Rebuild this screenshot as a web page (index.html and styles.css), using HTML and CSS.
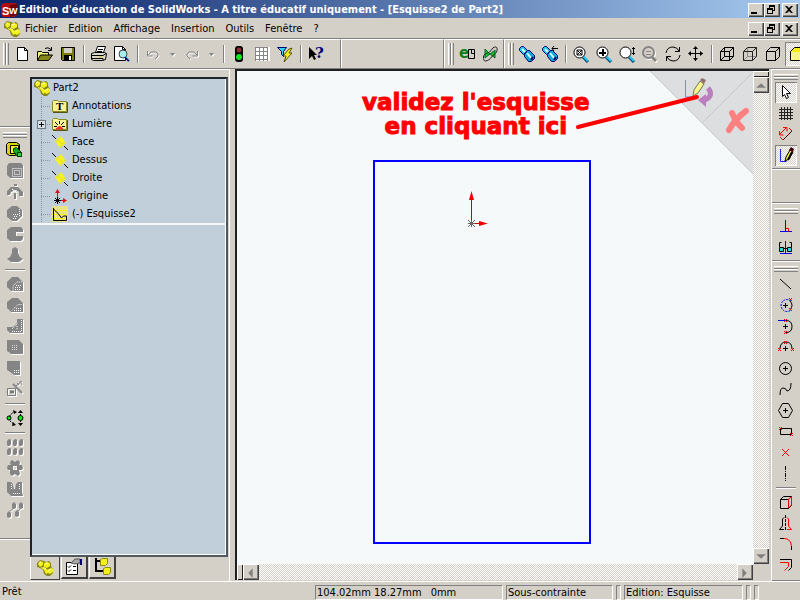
FILE: index.html
```html
<!DOCTYPE html>
<html lang="fr">
<head>
<meta charset="utf-8">
<title>SolidWorks - Esquisse2 de Part2</title>
<link rel="stylesheet" href="styles.css">
</head>
<body>
<svg class="defs" aria-hidden="true">
  <symbol id="part" viewBox="0 0 18 18">
    <path d="M1 4l3-3 4 1 2 1 3-1 2 2v3l1 2 1 1v4l-3 3h-3l-3-2-1-4-3-2-3-1z" fill="#86861c"/>
    <path d="M2 5l2-3 3 1v3L4 8zM8 4l3-1 3 1v3l-3 2-3-1zM5 8l3 1 3 1 1 4-2 1-2-4-3-2zM11 11l4-2 2 1v3l-3 2-2-1z" fill="#f4f01c"/>
    <path d="M3 4l2-1M9 5l3-1M12 12l3-2M7 8l3 2" stroke="#fdfcae" fill="none"/>
  </symbol>
  <symbol id="plane" viewBox="0 0 16 16">
    <path d="M3 7l6-5 5 7-6 5z" fill="#f6f21e"/>
    <path d="M0 1l4 4M12 12l4 4" stroke="#000" fill="none"/>
    <path d="M5 5l6 6M9 3l-5 5M13 8l-5 5" stroke="#c8c860" stroke-dasharray="1 1" fill="none"/>
  </symbol>
  <symbol id="folder" viewBox="0 0 16 14">
    <path d="M.5 12.500v-10l1-1h4l1 1h8v10z" fill="#f5f29a" stroke="#8a8a20"/>
    <path d="M15.500 3v10.500H1" fill="none" stroke="#55551a"/>
  </symbol>
  <symbol id="scope" viewBox="0 0 18 18">
    <path d="M1.500 3.500l2-2h2l4 4-4 4-4-4z" fill="#1cc4e8" stroke="#000080"/>
    <path d="M6.500 9.500l3-4h2l5 5v3l-3 3h-3l-4-5z" fill="#12a8dc" stroke="#000060"/>
    <path d="M4 4l3 3M9 8l4 5" stroke="#d8fbff" stroke-width="2"/>
    <path d="M13 15l2-3" stroke="#000060" stroke-width="2"/>
  </symbol>
  <symbol id="lens" viewBox="0 0 18 18">
    <path d="M11 12l5 5" stroke="#004a70" stroke-width="3"/><path d="M11 11l5 5" stroke="#2cc7f0" stroke-width="2"/>
    <circle cx="7.500" cy="7.500" r="5.500" fill="#fff" stroke="#000"/>
  </symbol>
  <symbol id="min" viewBox="0 0 12 10"><path d="M2 7h6v2H2z"/></symbol>
  <symbol id="restore" viewBox="0 0 12 10"><path d="M4 0h6v6H8V5h1V2H5v1H4zM2 3h6v6H2zM3 5v3h4V5z" fill-rule="evenodd"/></symbol>
  <symbol id="close" viewBox="0 0 12 10"><path d="M2 1h2l2 2 2-2h2L7 4.500 10 8H8L6 6 4 8H2l3-3.500z"/></symbol>
</svg>

<header class="titlebar">
  <svg class="logo" viewBox="0 0 18 16" aria-hidden="true">
    <path d="M1 3l3-2h12l1 2v10l-3 2H3l-2-2z" fill="#b00d10"/><path d="M10 3l7-1v11l-7 2z" fill="#6b0508"/>
    <text class="logo-text" x="2" y="13">S</text><text class="logo-text small" x="9" y="12">W</text>
  </svg>
  <h1 class="title">Edition d'éducation de SolidWorks - A titre éducatif uniquement - [Esquisse2 de Part2]</h1>
  <div class="winbtns">
    <button aria-label="Réduire"><svg><use href="#min"/></svg></button><button aria-label="Restaurer"><svg><use href="#restore"/></svg></button><button class="x" aria-label="Fermer"><svg><use href="#close"/></svg></button>
  </div>
</header>

<nav class="menubar">
  <svg class="doc" aria-hidden="true"><use href="#part"/></svg>
  <button>Fichier</button><button>Edition</button><button>Affichage</button><button>Insertion</button><button>Outils</button><button>Fenêtre</button><button>?</button>
  <div class="winbtns">
    <button aria-label="Réduire le document"><svg><use href="#min"/></svg></button><button aria-label="Restaurer le document"><svg><use href="#restore"/></svg></button><button class="x" aria-label="Fermer le document"><svg><use href="#close"/></svg></button>
  </div>
</nav>

<div class="toolbar">
  <div class="band">
    <i class="grip"></i>
    <button aria-label="Nouveau"><svg viewBox="0 0 18 18"><path d="M4.500 2.500h7l3 3v10h-10z" fill="#fff" stroke="#000"/><path d="M11.500 2.500v3h3" fill="none" stroke="#000"/></svg></button>
    <button aria-label="Ouvrir"><svg viewBox="0 0 18 18"><path d="M1.500 15V6.500h4l1 1h6V10" fill="#f3ef7c" stroke="#000"/><path d="M1.500 15.500l3-5.500h12l-4 5.500z" fill="#85851a" stroke="#000"/><path d="M9 3.500q3-2 6 1M15.500 2v3.500H12" fill="none" stroke="#000"/></svg></button>
    <button aria-label="Enregistrer"><svg viewBox="0 0 18 18"><path d="M2.500 2.500h13v13h-12l-1-1z" fill="#7d7d0c" stroke="#000"/><path d="M5 3h8v5H5z" fill="#d4d0c8"/><path d="M5 10h8v5H5z" fill="#000"/><path d="M10 11h2v4h-2z" fill="#fff"/></svg></button>
    <i class="sep"></i>
    <button aria-label="Imprimer"><svg viewBox="0 0 18 18"><path d="M5.500 7.500l2-6h8l-2 6" fill="#fff" stroke="#000"/><path d="M8 4.500h5M7 6.500h5" stroke="#000"/><path d="M1.500 8.500l3-1h10l2 1-1 6-3 1h-9l-2-1z" fill="#d8d6c8" stroke="#000"/><path d="M2 10.500h11l3-2M2 13.500h11v2" fill="none" stroke="#000"/><path d="M9 12h3" stroke="#d8c800"/></svg></button>
    <button aria-label="Aperçu"><svg viewBox="0 0 18 18"><path d="M1.500 1.500h8l3 3v11h-11z" fill="#fff" stroke="#000"/><path d="M9.500 1.500v3h3" fill="none" stroke="#000"/><circle cx="10" cy="9" r="4" fill="#aee" stroke="#444"/><path d="M12 12l4 4" stroke="#008" stroke-width="2"/><path d="M12 11l4 4" stroke="#1bb"/></svg></button>
    <i class="sep"></i>
    <button class="off" aria-label="Annuler" disabled><svg viewBox="0 0 18 18"><path d="M3.500 6v5h5M4 10l3-3h5l2 2v2l-3 3" fill="none" stroke="#858585"/></svg></button>
    <button class="drop off" aria-label="Liste annuler" disabled><svg viewBox="0 0 10 10"><path d="M2 4h5L4.500 7z" fill="#858585"/></svg></button>
    <button class="off" aria-label="Rétablir" disabled><svg viewBox="0 0 18 18"><path d="M14.500 6v5h-5M14 10l-3-3H6L4 9v2l3 3" fill="none" stroke="#858585"/></svg></button>
    <button class="drop off" aria-label="Liste rétablir" disabled><svg viewBox="0 0 10 10"><path d="M2 4h5L4.500 7z" fill="#858585"/></svg></button>
    <i class="sep"></i>
    <button aria-label="Reconstruire"><svg viewBox="0 0 18 18"><rect x="5" y="1" width="8" height="16" rx="3" fill="#000"/><circle cx="9" cy="5" r="2.500" fill="#8a3030"/><circle cx="9" cy="12" r="3" fill="#0de81b"/></svg></button>
    <button aria-label="Grille"><svg viewBox="0 0 18 18"><path d="M2 2h15v14H2z" fill="#fff"/><path d="M2.500 2v14M6.500 2v14M10.500 2v14M14.500 2v14M2 2.500h13M2 6.500h13M2 10.500h13M2 14.500h13" stroke="#858585"/></svg></button>
    <button aria-label="Filtres"><svg viewBox="0 0 18 18"><path d="M1.500 2.500h9l-3 4v5l-2-2v-3z" fill="#37cdf2" stroke="#000078"/><path d="M13 4l3-1-3 5h3l-8 9 2-6H7z" fill="#f6ee1b" stroke="#555500"/></svg></button>
    <i class="sep"></i>
    <button aria-label="Aide contextuelle"><svg viewBox="0 0 18 18"><path d="M2 2l8 8H7l2 4-2 1-2-4-3 3z"/><text class="help" x="8" y="13">?</text></svg></button>
  </div>
  <div class="band fill"></div>
  <div class="band">
    <i class="grip"></i>
    <button aria-label="eDrawing"><svg viewBox="0 0 18 18"><text class="edraw" x="1" y="13">e</text><path d="M10.500 4.500h6v9h-6zM13.500 4.500v4h3" fill="#d4d0c8" stroke="#000"/></svg></button>
    <button aria-label="Animer"><svg viewBox="0 0 18 18"><path d="M4 4l5 5-5 4zM14 5L9 9l5 4z" fill="#16c424" stroke="#063"/><path d="M2.500 12c0-4 5-3 7-6s3-4 5-4 2 3 1 5-4 3-5 5-4 4-6 4-2-2-2-4z" fill="none" stroke="#222"/></svg></button>
  </div>
  <div class="band last">
    <i class="grip"></i>
    <button aria-label="Orientation"><svg><use href="#scope"/></svg></button>
    <button aria-label="Vue précédente"><svg viewBox="0 0 18 18"><use href="#scope"/><path d="M11 3.500h6M13 1l-2 2.500L13 6" fill="none" stroke="#000"/></svg></button>
    <i class="sep"></i>
    <button aria-label="Zoom au mieux"><svg viewBox="0 0 18 18"><use href="#lens"/><path d="M5 5h5v5H5zM5 5l5 5M10 5l-5 5" fill="none" stroke="#000"/></svg></button>
    <button aria-label="Zoom fenêtre"><svg viewBox="0 0 18 18"><use href="#lens"/><path d="M7 4h2v7H7zM4 7h7v2H4z"/></svg></button>
    <button aria-label="Zoom avant arrière"><svg viewBox="0 0 18 18"><use href="#lens"/><path d="M15.500 2v8M14 3.500h3M14 8.500h3" stroke="#000"/></svg></button>
    <button class="off" aria-label="Zoom sélection" disabled><svg viewBox="0 0 18 18"><circle cx="7.500" cy="7.500" r="5.500" fill="#d4d0c8" stroke="#858585" stroke-width="2"/><path d="M5 6.500h5M5 9.500h5" stroke="#858585"/><path d="M11 12l4 4" stroke="#858585" stroke-width="3"/></svg></button>
    <button aria-label="Rotation"><svg viewBox="0 0 18 18"><path d="M2 8q1-6 7-6 4 0 6 4M16 10q-1 6-7 6-4 0-6-4M15.500 2v4.500H11M2.500 16v-4.500H7" fill="none" stroke="#000"/></svg></button>
    <button aria-label="Translation"><svg viewBox="0 0 18 18"><path d="M8.500 2v14M2 8.500h14" stroke="#000"/><path d="M6 4l2.500-3L11 4zM6 13l2.500 3 2.500-3zM4 6L1 8.500 4 11zM13 6l3 2.500-3 2.500z"/></svg></button>
    <i class="sep"></i>
    <button aria-label="Image filaire"><svg viewBox="0 0 18 18"><path d="M2.500 6.500h9v9h-9zM6.500 2.500h9v9h-9zM2.500 6.500l4-4M11.500 6.500l4-4M2.500 15.500l4-4M11.500 15.500l4-4" fill="none" stroke="#000"/></svg></button>
    <button aria-label="Lignes cachées en gris"><svg viewBox="0 0 18 18"><path d="M6.500 2.500v9h9M2.500 15.500l4-4" fill="none" stroke="#8a8a8a"/><path d="M2.500 6.500h9v9h-9zM2.500 6.500l4-4h9v9l-4 4M11.500 6.500l4-4" fill="none" stroke="#222"/></svg></button>
    <button aria-label="Lignes cachées supprimées"><svg viewBox="0 0 18 18"><path d="M2.500 6.500h9v9h-9zM2.500 6.500l4-4h9v9l-4 4M11.500 6.500l4-4" fill="none" stroke="#000"/></svg></button>
    <button class="on" aria-label="Image ombrée"><svg viewBox="0 0 18 18"><path d="M3.500 6.500l4-4h9v9l-4 4h-9z" fill="#f6ee1b" stroke="#000"/><path d="M4 7h9v8H4z" fill="#fbf68a"/></svg></button>
  </div>
</div>

<main class="work">
  <div class="side left">
    <div class="group top"></div>
    <div class="group grow">
      <i class="grip"></i>
      <button aria-label="Base bossage"><svg viewBox="0 0 18 18"><path d="M.5 3.500l2-2h8l3 2v7h-4v4h-6l-3-2z" fill="#d6d410" stroke="#000"/><path d="M4.500 4.500h8v8h-8z" fill="#f8f430" stroke="#000"/><path d="M7.500 7.500l3-1 5 5v4h-4l-4-5z" fill="#12a82a" stroke="#030"/><path d="M11.500 11.500h4v4h-4z" fill="#2bd845" stroke="#030"/></svg></button>
      <button class="off" aria-label="Enlèvement de matière" disabled><svg viewBox="0 0 18 18"><path d="M1 4l2-3h12l2 2v13H4l-3-3z" fill="#858585"/><path d="M6.500 6.500h9v8h-9zM8.500 8.500h5v4h-5z" fill="none" stroke="#fff" stroke-dasharray="1 1"/></svg></button>
      <button class="off" aria-label="Révolution" disabled><svg viewBox="0 0 18 18"><path d="M1 12V8l4-4h7l5 5v4h-4V9l-3-2-5 2-1 3z" fill="#858585"/><path d="M9 10v6M8 2h3" stroke="#858585" stroke-width="2"/><path d="M6 6l4 3" stroke="#fff"/></svg></button>
      <button class="off" aria-label="Enlèvement révolution" disabled><svg viewBox="0 0 18 18"><path d="M1 6l5-4h5l5 4v6l-5 5H6l-5-4z" fill="#858585"/><path d="M7 10.500h5M8 12.500h4M7 14.500h4M13.500 5v7" stroke="#fff" stroke-dasharray="1 1"/></svg></button>
      <button class="off" aria-label="Balayage" disabled><svg viewBox="0 0 18 18"><path d="M5 2h10l2 2v3h-7v4h7v3l-2 2H4l-3-3V5z" fill="#858585"/></svg></button>
      <button class="off" aria-label="Lissage" disabled><svg viewBox="0 0 18 18"><path d="M6 3l3-2 3 2v4l2 4 3 2-4 3H5l-4-3 3-2 2-4z" fill="#858585"/></svg></button>
      <i class="sep"></i>
      <button class="off" aria-label="Congé" disabled><svg viewBox="0 0 18 18"><path d="M1 7l5-5h6l5 5v9H5l-4-4z" fill="#858585"/><path d="M7 15.500V11l4-4h5M9 14.500h6M9 12.500h6M10 10.500h5" stroke="#fff" fill="none" stroke-dasharray="1 1"/></svg></button>
      <button class="off" aria-label="Chanfrein" disabled><svg viewBox="0 0 18 18"><path d="M1 6l5-4h6l5 5v9H5l-4-4z" fill="#858585"/><path d="M6 14.500l6-6h4M8 14.500h7M10 12.500h5" stroke="#fff" fill="none" stroke-dasharray="1 1"/></svg></button>
      <button class="off" aria-label="Nervure" disabled><svg viewBox="0 0 18 18"><path d="M11 2h6v14H4l-3-3v-3h6l4-4z" fill="#858585"/><path d="M6 12l6-6M15.500 3v12M6 14.500h9M11 12V8" stroke="#fff" fill="none" stroke-dasharray="1 1"/></svg></button>
      <button class="off" aria-label="Coque" disabled><svg viewBox="0 0 18 18"><path d="M1 2h12l4 4v10H5l-4-3z" fill="#858585"/><path d="M6 7.500h6M6 9.500h6M6 11.500h6" stroke="#ddd" stroke-dasharray="1 1"/></svg></button>
      <button class="off" aria-label="Dépouille" disabled><svg viewBox="0 0 18 18"><path d="M1 2h13v14H8l-7-5z" fill="#858585"/><path d="M8 11.500h5M8 13.500h5" stroke="#fff" stroke-dasharray="1 1"/></svg></button>
      <button class="off" aria-label="Assistance perçage" disabled><svg viewBox="0 0 18 18"><path d="M1.500 8.500h8v7h-8z" fill="none" stroke="#777"/><path d="M4 12h4" stroke="#777" stroke-width="3"/><path d="M7 4l9 9" stroke="#858585" stroke-width="2"/><path d="M10 6l6-5M11 3l2 2M14 1l2 4" stroke="#858585"/></svg></button>
      <i class="sep"></i>
      <button aria-label="Déplacer"><svg viewBox="0 0 18 18"><path d="M9 2L4 6v6l5 4M14.500 2v14" stroke="#000" fill="none" stroke-dasharray="2 1"/><path d="M7 1l4 2-3 2zM7 13l3 3-4 1zM12 4l2.500-3L17 4zM12 14l2.500 3 2.500-3z"/><circle cx="3" cy="9" r="2" fill="#0ee81b" stroke="#000"/><circle cx="14.500" cy="9" r="2.500" fill="#0ee81b" stroke="#000"/></svg></button>
      <i class="sep"></i>
      <button class="off" aria-label="Répétition linéaire" disabled><svg viewBox="0 0 18 18"><path d="M1 3l2-2h1l1 1v4L4 8H2L1 7zM7 3l2-2h1l1 1v4l-1 2H8L7 7zM13 3l2-2h1l1 1v4l-1 2h-2l-1-1zM1 12l2-2h1l1 1v4l-1 2H2l-1-1zM7 12l2-2h1l1 1v4l-1 2H8l-1-1zM13 12l2-2h1l1 1v4l-1 2h-2l-1-1z" fill="#858585"/></svg></button>
      <button class="off" aria-label="Répétition circulaire" disabled><svg viewBox="0 0 18 18"><path d="M4 3l2-2 3 2v4H5zM9 3l3-2 2 2-1 4H9zM2 6h5v5H2L1 9zM11 6h5l1 3-1 2h-5zM4 11h5v4l-3 2-2-2zM9 11h4l1 4-2 2-3-2z" fill="#858585"/><path d="M8 8h2v2H8z" fill="#d4d0c8"/></svg></button>
      <button class="off" aria-label="Symétrie" disabled><svg viewBox="0 0 18 18"><path d="M1 2h4l2 2 1 5h1l1-5 2-2h4v10l1 4H5l-4-4z" fill="#858585"/><path d="M5.500 4v6M13.500 4v6M7 13.500h8" stroke="#fff" stroke-dasharray="1 1"/></svg></button>
      <button class="off" aria-label="Répétition pilotée" disabled><svg viewBox="0 0 18 18"><path d="M6 3l2-2 2 2v4L8 8 6 7zM13 3l2-2 2 2v4l-2 1-2-1zM1 12l2-2 2 2v4l-2 1-2-1zM9 11l2-2 2 2v4l-2 1-2-1z" fill="#858585"/><path d="M4 10l4-3M12 10l3-3" stroke="#858585"/></svg></button>
    </div>
    <div class="group foot"></div>
  </div>

  <section class="manager">
    <div class="pane">
      <div class="tree">
        <div class="row root"><svg class="big" aria-hidden="true"><use href="#part"/></svg><span>Part2</span></div>
        <ul>
          <li><svg class="ico" viewBox="0 0 16 14"><use href="#folder"/><text class="t" x="4" y="11">T</text></svg><span>Annotations</span></li>
          <li><button class="plus" aria-label="Développer Lumière"></button><svg class="ico" viewBox="0 0 16 14"><use href="#folder"/><path d="M4 12q4-5 7 0z" fill="#e33" stroke="#e33"/><path d="M3 5l3 3M7.500 4v3M12 5L9 8M2 9.500h3M10 9.500h3" stroke="#000"/></svg><span>Lumière</span></li>
          <li><svg class="ico"><use href="#plane"/></svg><span>Face</span></li>
          <li><svg class="ico"><use href="#plane"/></svg><span>Dessus</span></li>
          <li><svg class="ico"><use href="#plane"/></svg><span>Droite</span></li>
          <li><svg class="ico" viewBox="0 0 16 16"><path d="M5.500 12V2M6 12.500h8" stroke="#e01020"/><path d="M3 5l2.500-4L8 5zM11 10l4 2.500-4 2.500z" fill="#e01020"/><path d="M2 12.500h7M5.500 9v7M3 10l5 5M8 10l-5 5" stroke="#000"/></svg><span>Origine</span></li>
          <li><svg class="ico" viewBox="0 0 16 16"><path d="M0 0h16v16H0z" fill="#e4e48c"/><path d="M0 4.500h16M0 8.500h16M5.500 0v16M9.500 0v16M13.500 0v16M0 12.500h16" stroke="#f6f210"/><path d="M1.500 2v12.500h13V10h-3l-2 2-3-4-5-5" fill="none" stroke="#000"/></svg><span>(-) Esquisse2</span></li>
        </ul>
      </div>
      <div class="below"></div>
    </div>
    <div class="tabs">
      <button class="active" aria-label="Arbre de création"><svg><use href="#part"/></svg></button>
      <button aria-label="Propriétés"><svg viewBox="0 0 18 18"><path d="M1.500 4.500h11v12h-11z" fill="#fff" stroke="#000"/><path d="M3 8.500l1 1 2-2M8 8.500h3M3 12.500l1 1 2-2M8 12.500h3" stroke="#000" fill="none"/><path d="M6 5l4-4h5v4l-5 1z" fill="#aaa" stroke="#555"/><path d="M15 1h2v6h-2z" fill="#00007a"/></svg></button>
      <button aria-label="Configurations"><svg viewBox="0 0 18 18"><path d="M3 0v13h7M3 3h5" stroke="#000" stroke-width="2" fill="none"/><path d="M7.500 1.500l2-1h5v5l-2 2h-5zM10.500 10.500l2-1h5v5l-2 2h-5z" fill="#f4f01c" stroke="#8a8a10"/></svg></button>
    </div>
  </section>

  <section class="view">
    <div class="canvas">
      <svg class="sketch" aria-hidden="true">
        <rect x="137" y="90" width="216" height="382" fill="none" stroke="#00f" stroke-width="2"/>
        <path d="M234.500 152V122M235 152.500h12" stroke="#c80000"/>
        <path d="M232 129l2.500-9 2.500 9zM242 150l9 2.500-9 2.500z" fill="#f00000"/>
        <path d="M231 149l7 7M238 149l-7 7M231 152.500h7M234.500 149v7" stroke="#666"/>
      </svg>
      <svg class="confirm" viewBox="0 0 103 103" aria-hidden="true">
        <path d="M0 0h103v103z" fill="#dcdedf"/>
        <path d="M0 0l103 103M53 51L103 1" stroke="#c6c8ca" fill="none"/>
        <path d="M35.500 9v17H44" stroke="#8080e8" fill="none"/>
        <path d="M43 25l1-6 6-9 4 3-6 9z" fill="#f8f68a" stroke="#77775a"/><path d="M50 9l2-2 4 2-2 4z" fill="#96706e"/>
        <path d="M58 17q7 8-5 13" stroke="#bb7fc0" stroke-width="5" fill="none"/><path d="M48 29l8-6v13z" fill="#bb7fc0"/>
        <path d="M96 40Q85 48 79 59M82 42Q86 51 92 57" stroke="#ff8080" stroke-width="6" stroke-linecap="round" fill="none"/>
      </svg>
      <p class="note">validez l'esquisse<br>en cliquant ici</p>
      <svg class="pointer" aria-hidden="true"><path d="M341 56L460 26" stroke="#f00" stroke-width="4" stroke-linecap="round"/></svg>
    </div>
    <div class="vscroll">
      <i class="nub"></i>
      <button aria-label="Haut"><svg viewBox="0 0 12 12"><path d="M2 8h9L6.500 4z"/></svg></button>
      <i class="track"></i>
      <button aria-label="Bas"><svg viewBox="0 0 12 12"><path d="M2 4h9L6.500 8z"/></svg></button>
    </div>
    <div class="hscroll">
      <i class="nub"></i>
      <button aria-label="Gauche"><svg viewBox="0 0 12 12"><path d="M8 2v9L4 6.500z"/></svg></button>
      <i class="track"></i>
      <button aria-label="Droite"><svg viewBox="0 0 12 12"><path d="M4 2v9l4-4.500z"/></svg></button>
    </div>
  </section>

  <div class="side right">
    <div class="group">
      <i class="grip"></i>
      <button class="on" aria-label="Sélectionner"><svg viewBox="0 0 18 18"><path d="M5.500 2.500l8 8h-4l2 4-2 1-2-4-2 2z" fill="#fff" stroke="#000"/></svg></button>
      <button aria-label="Grille"><svg viewBox="0 0 18 18"><path d="M4.500 3v13M7.500 3v13M10.500 3v13M13.500 3v13M2 5.500h14M2 8.500h14M2 11.500h14M2 14.500h14" stroke="#222"/></svg></button>
      <button aria-label="Cotation"><svg viewBox="0 0 18 18"><path d="M2 10l8-8M2.500 6v4h4M6 2.500h4v4" stroke="#f00" fill="none"/><path d="M3 12l3 3 9-9-3-3" stroke="#d00" fill="none"/><path d="M6 15l9-9" stroke="#000" stroke-dasharray="3 1"/></svg></button>
      <button class="on" aria-label="Esquisse"><svg viewBox="0 0 18 18"><path d="M3.500 3v12.500h6" stroke="#2020e0" fill="none"/><path d="M8 15l1-4 4-7 3 2-4 7z" fill="#f2ee3c" stroke="#000"/><path d="M12 4l2-3 3 2-1 3z" fill="#400"/><path d="M15 6l-4 8" stroke="#000" stroke-width="2"/></svg></button>
    </div>
    <div class="group blank"></div>
    <div class="group">
      <i class="grip"></i>
      <button aria-label="Ajouter des relations"><svg viewBox="0 0 18 18"><path d="M8.500 3v11M3 14.500h12" stroke="#00f"/><path d="M9 11.500h2.500v3" stroke="#e00" fill="none"/></svg></button>
      <button aria-label="Afficher les relations"><svg viewBox="0 0 18 18"><path d="M8.500 3v12M3 15.500h12" stroke="#00f"/><path d="M2.500 9.500h4v4h-4zM10.500 9.500h4v4h-4z" fill="#2ed8d8" stroke="#000"/><path d="M2.500 9V4.500h2M14.500 9V4.500h-2M7 10.500h3" fill="none" stroke="#000"/></svg></button>
    </div>
    <div class="group end">
      <i class="grip"></i>
      <button aria-label="Ligne"><svg viewBox="0 0 18 18"><path d="M3 4l11 10" stroke="#000"/></svg></button>
      <button aria-label="Arc par son centre"><svg viewBox="0 0 18 18"><path d="M14 5a6 6 0 1 0 0 9" fill="none" stroke="#00f" stroke-dasharray="2 1"/><path d="M13 5q4 4 0 9M6 9.500h5M8.500 7v5" fill="none" stroke="#000"/><path d="M12 2l3 3M15 2l-3 3M12 12l3 3M15 12l-3 3" stroke="#f00"/></svg></button>
      <button aria-label="Arc tangent"><svg viewBox="0 0 18 18"><path d="M1 3.500h8" stroke="#00f"/><path d="M9 3.500q6 0 6 6t-6 6M6 9.500h5M8.500 7v5" fill="none" stroke="#000"/><path d="M7 2l3 3M10 2L7 5M7 14l3 3M10 14l-3 3" stroke="#f00"/></svg></button>
      <button aria-label="Arc trois points"><svg viewBox="0 0 18 18"><path d="M3 11q0-7 6-7t6 7M6 10.500h5M8.500 8v5" fill="none" stroke="#000"/><path d="M1 10l3 3M4 10l-3 3M7 3l3 3M10 3L7 6M14 10l3 3M17 10l-3 3" stroke="#f00"/></svg></button>
      <button aria-label="Cercle"><svg viewBox="0 0 18 18"><circle cx="8.500" cy="9.500" r="6" fill="none" stroke="#000"/><path d="M6 9.500h5M8.500 7v5" stroke="#000"/></svg></button>
      <button aria-label="Spline"><svg viewBox="0 0 18 18"><path d="M3 15q0-7 3-7t4 3q4 0 4-8" fill="none" stroke="#000"/></svg></button>
      <button aria-label="Polygone"><svg viewBox="0 0 18 18"><path d="M1.500 9.500l4-7h6l4 7-4 7h-6zM6 9.500h5M8.500 7v5" fill="none" stroke="#000"/></svg></button>
      <button aria-label="Rectangle"><svg viewBox="0 0 18 18"><path d="M3.500 6.500h11v6h-11z" fill="none" stroke="#000"/><path d="M2 5l3 3M5 5L2 8M13 11l3 3M16 11l-3 3" stroke="#f00"/></svg></button>
      <button aria-label="Point"><svg viewBox="0 0 18 18"><path d="M5 6l7 7M12 6l-7 7" stroke="#f00"/></svg></button>
      <button aria-label="Ligne de construction"><svg viewBox="0 0 18 18"><path d="M8.500 2v15" stroke="#000" stroke-dasharray="4 1 1 1"/></svg></button>
      <i class="sep"></i>
      <button aria-label="Convertir les entités"><svg viewBox="0 0 18 18"><path d="M3.500 6.500h8v9h-8zM3.500 6.500l3-3h8v9l-3 3" fill="none" stroke="#000"/><path d="M11.500 6v9l3-3V4z" fill="none" stroke="#e00"/></svg></button>
      <button aria-label="Symétrie des entités"><svg viewBox="0 0 18 18"><path d="M7 3.500L5.500 5v7l-3 3.500H7" fill="none" stroke="#000"/><path d="M8.500 1v16" stroke="#000" stroke-dasharray="3 1"/><path d="M10 3.500L11.500 5v7l3 3.500H10" fill="none" stroke="#f00"/></svg></button>
      <button aria-label="Congé d'esquisse"><svg viewBox="0 0 18 18"><path d="M3 3.500h4M14.500 11v4" stroke="#000"/><path d="M7 3.500q7 0 7.500 8" fill="none" stroke="#f00"/></svg></button>
      <button aria-label="Décaler les entités"><svg viewBox="0 0 18 18"><path d="M3 3.500h11.500v8l-3 3" fill="none" stroke="#000"/><path d="M3 6.500h8.500v4l-4 4" fill="none" stroke="#f00"/></svg></button>
    </div>
  </div>
</main>

<footer class="status">
  <span class="hint">Prêt</span>
  <span class="cell coords"><span>104.02mm 18.27mm</span><span>0mm</span></span>
  <span class="cell constraint">Sous-contrainte</span>
  <span class="cell tiny"></span>
  <span class="cell mode">Edition: Esquisse</span>
  <span class="cell tiny"></span>
  <span class="cell tiny"></span>
</footer>
</body>
</html>
```

FILE: styles.css
```css
* { box-sizing: border-box; }

:root {
  --face: #d4d0c8;
  --shade: #808080;
  --hatch: repeating-conic-gradient(#fff 0 25%, #d4d0c8 0 50%) 0 0 / 2px 2px;
}

body {
  margin: 0;
  height: 100vh;
  display: flex;
  flex-direction: column;
  overflow: hidden;
  background: var(--face);
  color: #000;
  font: 11px/14px "DejaVu Sans Condensed", "DejaVu Sans", sans-serif;
}

button {
  margin: 0;
  padding: 0;
  border: 0;
  background: none;
  color: inherit;
  font: inherit;
}

svg { display: block; width: 18px; height: 18px; flex: none; overflow: visible; }
.defs { position: absolute; width: 0; height: 0; overflow: hidden; }

/* Title and menu */
.titlebar {
  height: 18px;
  flex: none;
  display: flex;
  align-items: center;
  padding-top: 1px;
  background: linear-gradient(90deg, #0a246a, #a6caf0);
}
.logo { height: 16px; }
.logo-text { font: bold 11px "Liberation Sans", sans-serif; fill: #fff; }
.logo-text.small { font-size: 9px; }
.title {
  margin: 0;
  padding-left: 1px;
  color: #fff;
  font-size: 11px;
  font-weight: bold;
  white-space: nowrap;
}
.winbtns { display: flex; margin-left: auto; padding-right: 2px; }
.winbtns button {
  width: 16px;
  height: 14px;
  padding: 1px;
  background: var(--face);
  box-shadow: inset 1px 1px #fff, inset -1px -1px #404040, inset -2px -2px var(--shade);
}
.winbtns svg { width: 12px; height: 10px; }
.winbtns .x { margin-left: 2px; }

.menubar {
  height: 20px;
  flex: none;
  display: flex;
  align-items: center;
  padding-top: 1px;
}
.doc { margin: 0 4px 0 3px; }
.menubar > button { padding-right: 11px; }

/* Horizontal toolbars */
.toolbar {
  height: 31px;
  flex: none;
  display: flex;
  border-top: 1px solid var(--shade);
  border-bottom: 1px solid var(--shade);
}
.band {
  display: flex;
  align-items: center;
  flex: none;
  padding: 0 12px 0 3px;
  border-top: 1px solid #fff;
  border-left: 1px solid #fff;
  border-right: 1px solid var(--shade);
}
.band:first-child { border-left: 0; }
.band.fill { flex: 1; }
.band:nth-child(3) { padding-right: 1px; }
.band.last { width: 296px; padding-right: 0; overflow: hidden; border-right: 0; }
.band button {
  width: 23px;
  height: 24px;
  flex: none;
  display: flex;
  align-items: center;
  padding-left: 2px;
}
.band .drop { width: 16px; padding-left: 3px; }
.drop svg { width: 10px; height: 10px; }
.band .sep {
  width: 2px;
  height: 18px;
  margin: 0 3px;
  flex: none;
  border-left: 1px solid var(--shade);
  border-right: 1px solid #fff;
}
.band .grip {
  width: 6px;
  height: 22px;
  margin-right: 2px;
  flex: none;
  background: linear-gradient(90deg, #fff 1px, var(--face) 1px 2px, var(--shade) 2px 3px, #fff 3px 4px, var(--face) 4px 5px, var(--shade) 5px);
}
.off svg { filter: drop-shadow(1px 1px 0 #fff); }
.on { background: var(--hatch); box-shadow: inset 1px 1px var(--shade), inset -1px -1px #fff; }
.help { font: bold 15px "DejaVu Serif", serif; fill: #00007a; }
.edraw { font: bold 15px "DejaVu Sans", sans-serif; fill: #0d7a1c; }

/* Work area */
.work { flex: 1; min-height: 0; display: flex; }

.side { flex: none; display: flex; flex-direction: column; }
.side.left { width: 30px; }
.side.right { width: 29px; border-left: 1px solid #fff; }
.group {
  flex: none;
  display: flex;
  flex-direction: column;
  align-items: center;
  padding: 4px 0 2px;
  border-top: 1px solid #fff;
  border-bottom: 1px solid var(--shade);
}
.group.top { height: 58px; }
.group.grow { height: 412px; }
.group.foot { flex: 1; border-bottom: 0; }
.group.blank { height: 34px; }
.group.end { padding-bottom: 4px; }
.side button {
  width: 22px;
  height: 21px;
  flex: none;
  display: flex;
  justify-content: center;
  padding-top: 1px;
}
.side .grip {
  width: 24px;
  height: 6px;
  margin-bottom: 2px;
  flex: none;
  background: linear-gradient(#fff 1px, var(--face) 1px 2px, var(--shade) 2px 3px, #fff 3px 4px, var(--face) 4px 5px, var(--shade) 5px);
}
.side .sep {
  width: 20px;
  height: 2px;
  margin: 3px 0;
  flex: none;
  border-top: 1px solid var(--shade);
  border-bottom: 1px solid #fff;
}

/* Feature manager */
.manager {
  width: 200px;
  flex: none;
  display: flex;
  flex-direction: column;
  padding: 7px 0 1px;
  border-top: 1px solid #fff;
  border-right: 1px solid #fff;
}
.pane {
  flex: 1;
  display: flex;
  flex-direction: column;
  margin-right: 1px;
  border: 2px solid #202428;
  border-right-color: #505860;
  border-bottom-color: #505860;
  background: #c1cfdb;
  box-shadow: inset -1px -1px #fff;
}
.tree { border-bottom: 2px solid #f4f6f8; }
.tree .row, .tree li { display: flex; align-items: center; height: 18px; white-space: nowrap; }
.root { padding-left: 1px; gap: 2px; }
.tree ul {
  margin: 0 0 0 9px;
  padding: 0;
  list-style: none;
  background: linear-gradient(#8a949c 50%, transparent 50%) 0 0 / 1px 2px repeat-y;
}
.tree li { position: relative; gap: 4px; }
.tree li::before {
  content: "";
  width: 10px;
  height: 1px;
  margin-right: -3px;
  background: repeating-linear-gradient(90deg, #8a949c 0 1px, transparent 1px 2px);
}
.ico { width: 16px; height: 16px; }
.t { font: bold 11px "Liberation Serif", serif; }
.plus {
  position: absolute;
  left: -4px;
  top: 5px;
  width: 9px;
  height: 9px;
  border: 1px solid #707880;
  background:
    linear-gradient(#000, #000) center / 5px 1px no-repeat,
    linear-gradient(#000, #000) center / 1px 5px no-repeat,
    #d8e0e6;
}

.tabs { height: 23px; flex: none; display: flex; gap: 1px; }
.tabs button {
  width: 27px;
  height: 22px;
  display: flex;
  align-items: center;
  justify-content: center;
  border-right: 2px solid #404040;
  border-bottom: 2px solid #404040;
  border-left: 1px solid #fff;
}
.tabs .active { width: 30px; height: 23px; border-right-width: 1px; border-bottom-width: 1px; }

/* Sketch window */
.view {
  flex: 1;
  min-width: 0;
  margin: 0 2px 1px 5px;
  display: grid;
  grid-template-columns: 1fr 16px;
  grid-template-rows: 1fr 16px;
  border-top: 2px solid #202020;
  border-left: 2px solid #202020;
}
.canvas { position: relative; overflow: hidden; background: #f5f9fa; }
.sketch, .pointer { position: absolute; inset: 0; width: 100%; height: 100%; }
.confirm { position: absolute; top: 0; right: 0; width: 103px; height: 103px; }
.note {
  position: absolute;
  left: 125px;
  top: 19px;
  margin: 0;
  color: #f00;
  font: bold 23px/24px "DejaVu Sans", sans-serif;
  -webkit-text-stroke: 1px #f00;
  text-align: center;
  white-space: nowrap;
}
.vscroll, .hscroll { display: flex; }
.vscroll { flex-direction: column; }
.vscroll button, .hscroll button {
  width: 16px;
  height: 16px;
  flex: none;
  padding: 1px;
  background: var(--face);
  box-shadow: inset 1px 1px #fff, inset -1px -1px #404040, inset -2px -2px var(--shade);
}
.vscroll svg, .hscroll svg { width: 13px; height: 13px; fill: var(--shade); }
.track { flex: 1; background: var(--hatch); }
.nub {
  height: 6px;
  flex: none;
  background: var(--face);
  box-shadow: inset 1px 1px #fff, inset -1px -1px #202020;
}
.hscroll .nub { width: 6px; height: 16px; }

/* Status bar */
.status {
  height: 19px;
  flex: none;
  display: flex;
  align-items: center;
  gap: 3px;
  padding: 2px 41px 0 2px;
  border-top: 1px solid #fff;
}
.hint { flex: 1; }
.cell {
  height: 15px;
  padding-left: 1px;
  white-space: nowrap;
  border: 1px solid var(--shade);
  border-right-color: #fff;
  border-bottom-color: #fff;
}
.coords { width: 188px; display: flex; gap: 9px; }
.constraint { width: 107px; }
.tiny { width: 5px; }
.mode { width: 119px; }
```
